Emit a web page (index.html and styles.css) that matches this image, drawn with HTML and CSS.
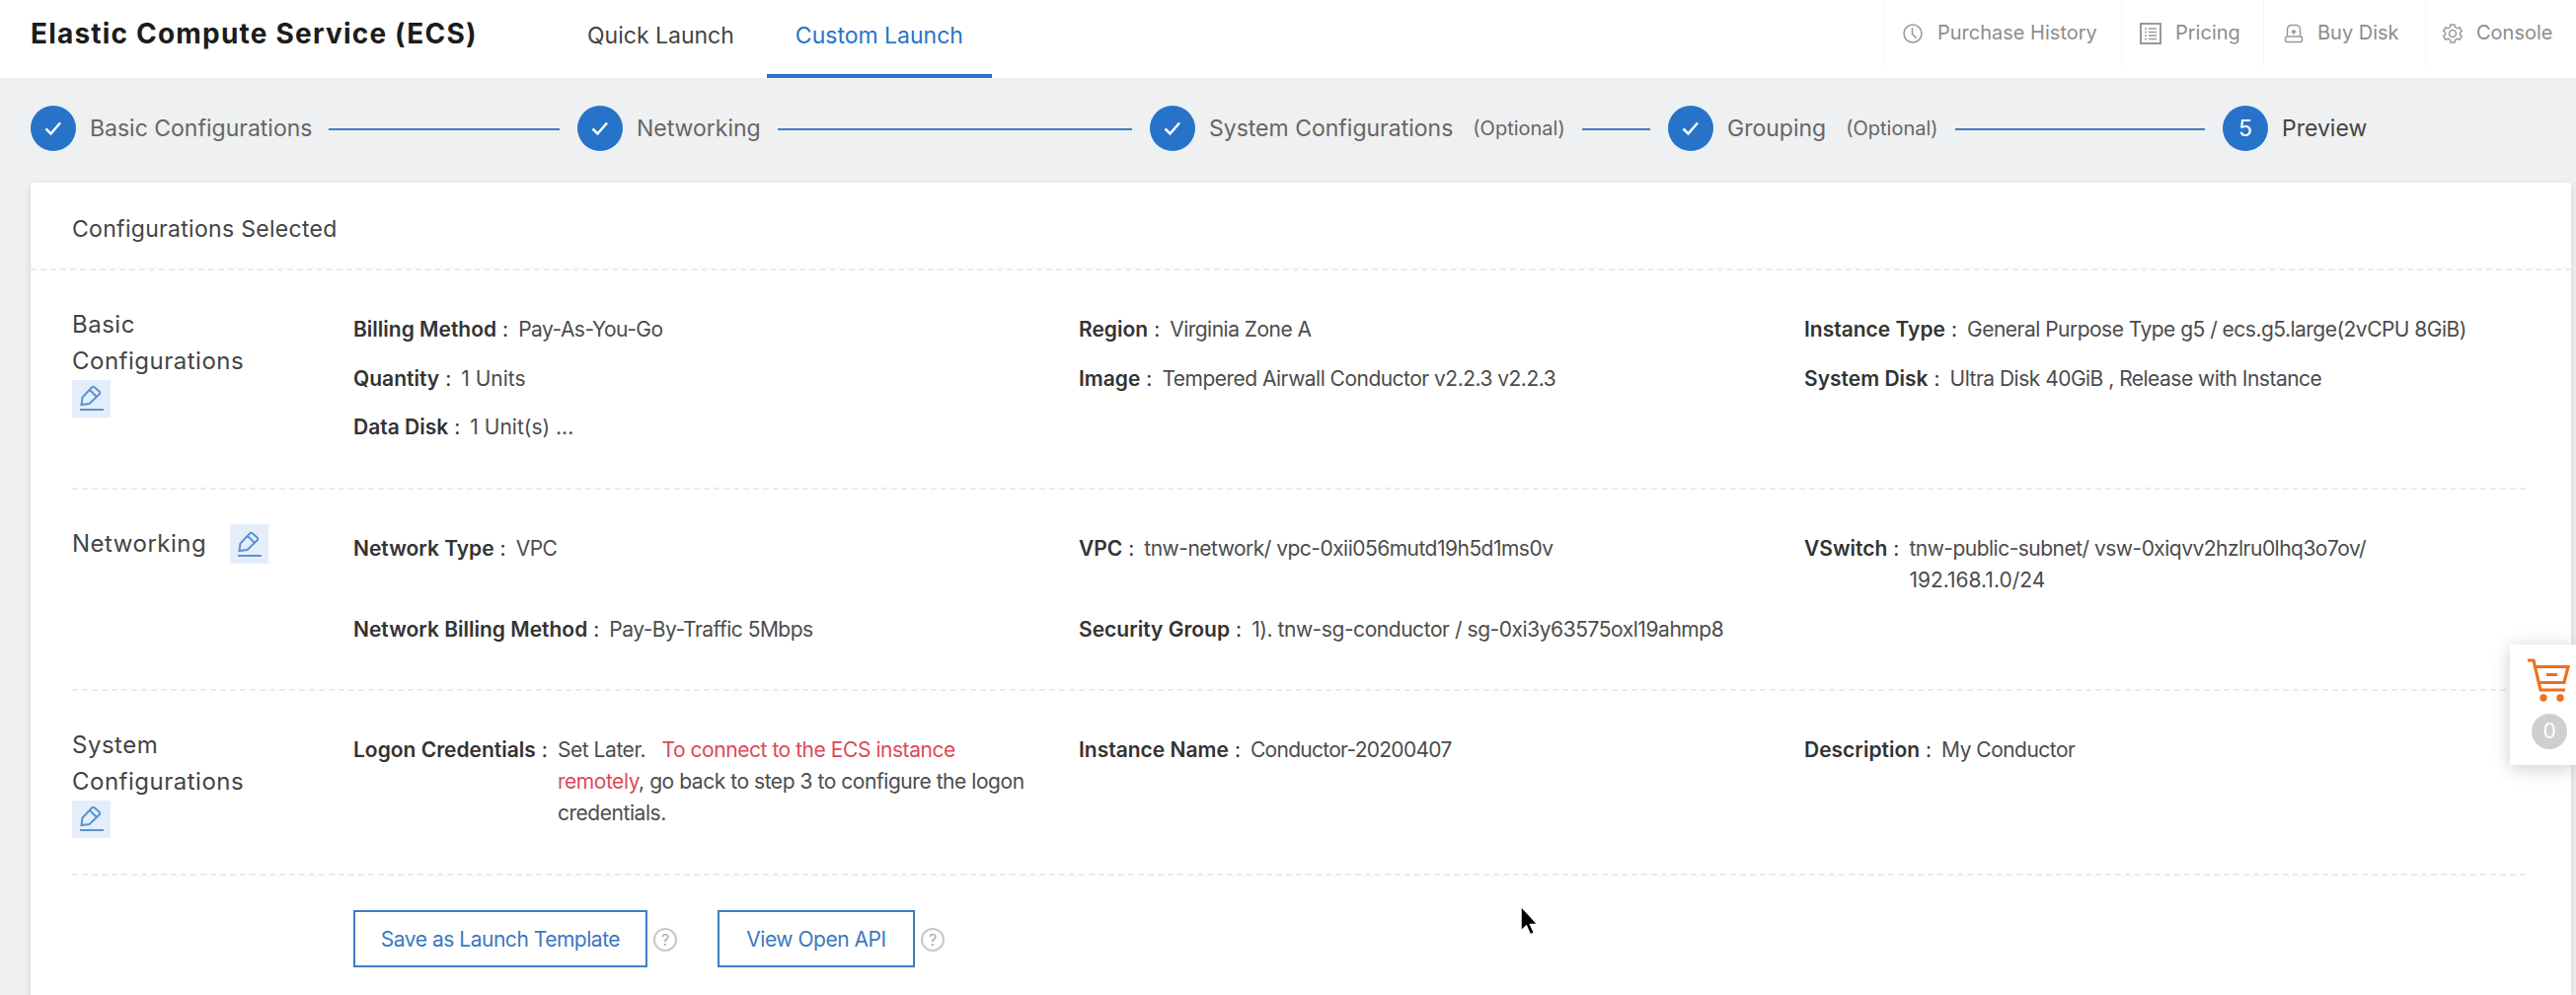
FILE: index.html
```
<!DOCTYPE html>
<html lang="en">
<head>
<meta charset="utf-8">
<title>Elastic Compute Service (ECS)</title>
<link rel="stylesheet" href="styles.css">
</head>
<body>
<header class="topbar">
  <h1 class="brand">Elastic Compute Service (ECS)</h1>
  <nav class="tabs">
    <a class="tab">Quick Launch</a>
    <a class="tab tab-active">Custom Launch</a>
  </nav>
  <nav class="links">
    <a class="link link-history">
      <svg width="22" height="22" viewBox="0 0 22 22"><circle cx="11" cy="11" r="9"/><path d="M10.500 5v6.500l4 4"/></svg>
      <span>Purchase History</span></a>
    <a class="link link-pricing">
      <svg width="22" height="22" viewBox="0 0 22 22"><path stroke-width="2" d="M1 1h20v20H1z"/><path d="M5 6h2M9 6h8M5 9.500h2M9 9.500h8M5 13h2M9 13h8M5 16.500h2M9 16.500h8"/></svg>
      <span>Pricing</span></a>
    <a class="link link-disk">
      <svg width="20" height="20" viewBox="0 0 20 20"><path d="M3.500 13V5.500A4 4 0 0 1 7.500 1.500h5a4 4 0 0 1 4 4V13M3 13h14a1.500 1.500 0 0 1 1.500 1.500v2.500a1.500 1.500 0 0 1-1.500 1.500H3A1.500 1.500 0 0 1 1.500 17v-2.500A1.500 1.500 0 0 1 3 13z"/><path class="solid" d="M10 5.500L7 9h2v1.500h2V9h2z"/></svg>
      <span>Buy Disk</span></a>
    <a class="link link-console">
      <svg width="20" height="20" viewBox="0 0 20 20"><path d="M8 1h4l.6 2.600 2 1.200 2.600-.8 2 3.400L17.300 9.200v1.600l1.900 1.800-2 3.400-2.600-.8-2 1.200L12 19H8l-.6-2.600-2-1.200-2.600.8-2-3.400 1.900-1.800V9.200L.8 7.400l2-3.400 2.600.8 2-1.200z"/><circle cx="10" cy="10" r="3.500"/></svg>
      <span>Console</span></a>
  </nav>
</header>

<ol class="steps">
  <li class="step"><span class="dot"><svg width="20" height="20" viewBox="0 0 20 20"><path d="M2.500 10.500l5 5L17 4.500"/></svg></span><span>Basic Configurations</span><i class="rail"></i></li>
  <li class="step"><span class="dot"><svg width="20" height="20" viewBox="0 0 20 20"><path d="M2.500 10.500l5 5L17 4.500"/></svg></span><span>Networking</span><i class="rail"></i></li>
  <li class="step"><span class="dot"><svg width="20" height="20" viewBox="0 0 20 20"><path d="M2.500 10.500l5 5L17 4.500"/></svg></span><span>System Configurations</span><span class="optional">(Optional)</span><i class="rail"></i></li>
  <li class="step"><span class="dot"><svg width="20" height="20" viewBox="0 0 20 20"><path d="M2.500 10.500l5 5L17 4.500"/></svg></span><span>Grouping</span><span class="optional">(Optional)</span><i class="rail"></i></li>
  <li class="step step-current"><span class="dot">5</span><span>Preview</span></li>
</ol>

<main class="card">
  <h2 class="card-title">Configurations Selected</h2>

  <section class="group group-basic">
    <h3 class="group-title">Basic<br>Configurations<br><span class="edit"><svg width="26" height="27" viewBox="0 0 26 27"><path d="M2.500 20l1-7.500L13 2.500q1.500-1.500 3 0l4.500 4q1.500 1.500 0 3L10.500 19zM11 5l7 7M1 25h24"/></svg></span></h3>
    <dl class="fields">
      <div class="field"><dt>Billing Method</dt><dd>Pay-As-You-Go</dd></div>
      <div class="field"><dt>Region</dt><dd>Virginia Zone A</dd></div>
      <div class="field"><dt>Instance Type</dt><dd>General Purpose Type g5 / ecs.g5.large(2vCPU 8GiB)</dd></div>
      <div class="field"><dt>Quantity</dt><dd class="loose">1 Units</dd></div>
      <div class="field"><dt>Image</dt><dd>Tempered Airwall Conductor v2.2.3 v2.2.3</dd></div>
      <div class="field"><dt>System Disk</dt><dd>Ultra Disk 40GiB , Release with Instance</dd></div>
      <div class="field"><dt>Data Disk</dt><dd class="loose">1 Unit(s) ...</dd></div>
    </dl>
  </section>

  <section class="group group-network">
    <h3 class="group-title">Networking<span class="edit edit-inline"><svg width="26" height="27" viewBox="0 0 26 27"><path d="M2.500 20l1-7.500L13 2.500q1.500-1.500 3 0l4.500 4q1.500 1.500 0 3L10.500 19zM11 5l7 7M1 25h24"/></svg></span></h3>
    <dl class="fields">
      <div class="field"><dt>Network Type</dt><dd>VPC</dd></div>
      <div class="field"><dt>VPC</dt><dd>tnw-network/ vpc-0xii056mutd19h5d1ms0v</dd></div>
      <div class="field"><dt>VSwitch</dt><dd>tnw-public-subnet/ vsw-0xiqvv2hzlru0lhq3o7ov/<br><span class="loose">192.168.1.0/24</span></dd></div>
      <div class="field"><dt>Network Billing Method</dt><dd>Pay-By-Traffic 5Mbps</dd></div>
      <div class="field"><dt>Security Group</dt><dd class="semi">1). tnw-sg-conductor / sg-0xi3y63575oxl19ahmp8</dd></div>
    </dl>
  </section>

  <section class="group group-system">
    <h3 class="group-title">System<br>Configurations<br><span class="edit"><svg width="26" height="27" viewBox="0 0 26 27"><path d="M2.500 20l1-7.500L13 2.500q1.500-1.500 3 0l4.500 4q1.500 1.500 0 3L10.500 19zM11 5l7 7M1 25h24"/></svg></span></h3>
    <dl class="fields">
      <div class="field"><dt>Logon Credentials</dt><dd class="semi">Set Later. &nbsp;<span class="warn"> To connect to the ECS instance<br>remotely</span>, go back to step 3 to configure the logon<br>credentials.</dd></div>
      <div class="field"><dt>Instance Name</dt><dd class="tight">Conductor-20200407</dd></div>
      <div class="field"><dt>Description</dt><dd>My Conductor</dd></div>
    </dl>
  </section>

  <div class="actions">
    <button class="btn btn-save">Save as Launch Template</button><span class="help">?</span>
    <button class="btn btn-api">View Open API</button><span class="help">?</span>
  </div>
</main>

<aside class="cart">
  <svg width="44" height="46" viewBox="0 0 44 46"><path d="M0 3h6l7 30h25M8 9.500h33l-4 16H11.500M19 17.500h11" fill="none" stroke="#ee6f1f" stroke-width="3.200"/><circle cx="16" cy="41" r="3.700" fill="#ee6f1f"/><circle cx="33" cy="41" r="3.700" fill="#ee6f1f"/></svg>
  <span class="cart-count">0</span>
</aside>

<svg class="pointer" width="22" height="34" viewBox="0 0 22 34"><path d="M2 2v25l5.500-5 4 9 4-2-4-8.500H19z" fill="#000" stroke="#fff" stroke-width="1.500"/></svg>
</body>
</html>
```
FILE: styles.css
```
* { box-sizing: border-box; }

body {
  margin: 0;
  height: 1008px;
  overflow: hidden;
  background: #eff0f1;
  color: #4c4c4c;
  font: 21px/32.2px Inter, "Liberation Sans", sans-serif;
}

h1, h2, h3, dl, dd, ol { margin: 0; padding: 0; font-weight: 400; }
svg { display: block; flex: none; }

.topbar {
  display: flex;
  height: 79px;
  padding-left: 31px;
  background: #fff;
}
.brand {
  width: 535px;
  font-size: 28px;
  line-height: 69px;
  font-weight: 700;
  letter-spacing: 1.2px;
  color: #1c1c1c;
  white-space: nowrap;
}
.tabs { display: flex; }
.tab { padding: 0 33px 0 29px; font-size: 23px; line-height: 73px; color: #444; white-space: nowrap; }
.tab-active { width: 228px; padding-right: 0; color: #2a73c9; border-bottom: 4px solid #2a73c9; }
.links { display: flex; margin-left: auto; }
.link {
  display: flex;
  align-items: center;
  gap: 14px;
  height: 67px;
  font-size: 20px;
  color: #8d8d8d;
  border-left: 1px solid #f7f7f7;
  white-space: nowrap;
}
.link svg { fill: none; stroke: #999; stroke-width: 1.5; }
.link .solid { fill: #999; stroke: none; }
.link-history { width: 240px; padding-left: 17px; }
.link-pricing { width: 144px; padding-left: 18px; }
.link-disk { width: 164px; padding-left: 20px; }
.link-console { width: 153px; padding-left: 17px; }

.steps {
  display: grid;
  grid-template-columns: 554px 580px 525px 562px auto;
  height: 106px;
  padding: 28px 0 0 31px;
  list-style: none;
}
.step { display: flex; align-items: center; height: 46px; font-size: 23px; color: #666; white-space: nowrap; }
.dot {
  display: grid;
  place-items: center;
  width: 46px;
  height: 46px;
  margin-right: 14px;
  border-radius: 50%;
  background: #2673c9;
  color: #fff;
}
.dot svg { fill: none; stroke: #fff; stroke-width: 2.5; }
.optional { margin-left: 20px; font-size: 20px; }
.rail { flex: 1; height: 2px; margin: 2px 18px 0 17px; background: #3f7dc0; }
.step-current { color: #444; }

.card {
  width: 2574px;
  height: 823px;
  margin-left: 31px;
  background: #fff;
  box-shadow: 0 3px 8px rgba(0, 0, 0, .12);
}
.card-title {
  height: 89px;
  padding-left: 42px;
  font-size: 23px;
  line-height: 94px;
  letter-spacing: .3px;
  color: #444;
  border-bottom: 2px dashed #ebebeb;
}
.group { display: flex; margin: 0 46px 0 42px; border-bottom: 2px dashed #ebebeb; }
.group-basic { height: 222px; }
.group-network { height: 204px; }
.group-system { height: 187px; }
.group-title {
  flex: none;
  width: 285px;
  padding-top: 36px;
  font-size: 24px;
  line-height: 37.4px;
  letter-spacing: .5px;
  color: #444;
}
.edit {
  display: inline-grid;
  place-items: center;
  width: 39px;
  height: 38px;
  background: #e4eefa;
  vertical-align: top;
}
.edit-inline { height: 40px; margin: -1px 0 0 24px; }
.edit svg { fill: none; stroke: #5c93d1; stroke-width: 2; }
.fields {
  display: grid;
  grid-template-columns: repeat(3, 735px);
  align-content: start;
  row-gap: 17.5px;
  padding-top: 44px;
}
.field { display: flex; white-space: nowrap; }
.field dt { font-weight: 600; color: #333; }
.field dt::after { content: ":"; margin: 0 10px 0 6px; font-weight: 400; }
.field dd { letter-spacing: -.52px; }
.field .semi { letter-spacing: -.45px; }
.field .tight { letter-spacing: -.72px; }
.field .loose { letter-spacing: 0; }
.warn { color: #dc4a57; }

.actions { display: flex; align-items: center; padding: 35px 0 0 327px; }
.btn {
  height: 58px;
  padding: 0;
  border: 2px solid #3d7dc4;
  background: #fff;
  color: #3a78c2;
  font: 21px Inter, "Liberation Sans", sans-serif;
  letter-spacing: -.48px;
}
.btn-save { width: 298px; }
.btn-api { width: 200px; }
.help {
  display: grid;
  place-items: center;
  width: 24px;
  height: 24px;
  margin: 2px 41px 0 6px;
  border: 2px solid #c8c8c8;
  border-radius: 50%;
  color: #aaa;
  font-size: 16px;
  line-height: 20px;
}

.cart {
  position: absolute;
  right: 0;
  top: 653px;
  width: 67px;
  height: 122px;
  padding: 13px 0 0 18px;
  background: #fff;
  box-shadow: 0 3px 18px rgba(0, 0, 0, .2);
}
.cart-count {
  display: grid;
  place-items: center;
  width: 36px;
  height: 36px;
  margin: 11px 0 0 4px;
  border-radius: 50%;
  background: #cfcfcf;
  color: #fff;
  font-size: 21px;
}
.pointer { position: absolute; left: 1539px; top: 916px; }
```
